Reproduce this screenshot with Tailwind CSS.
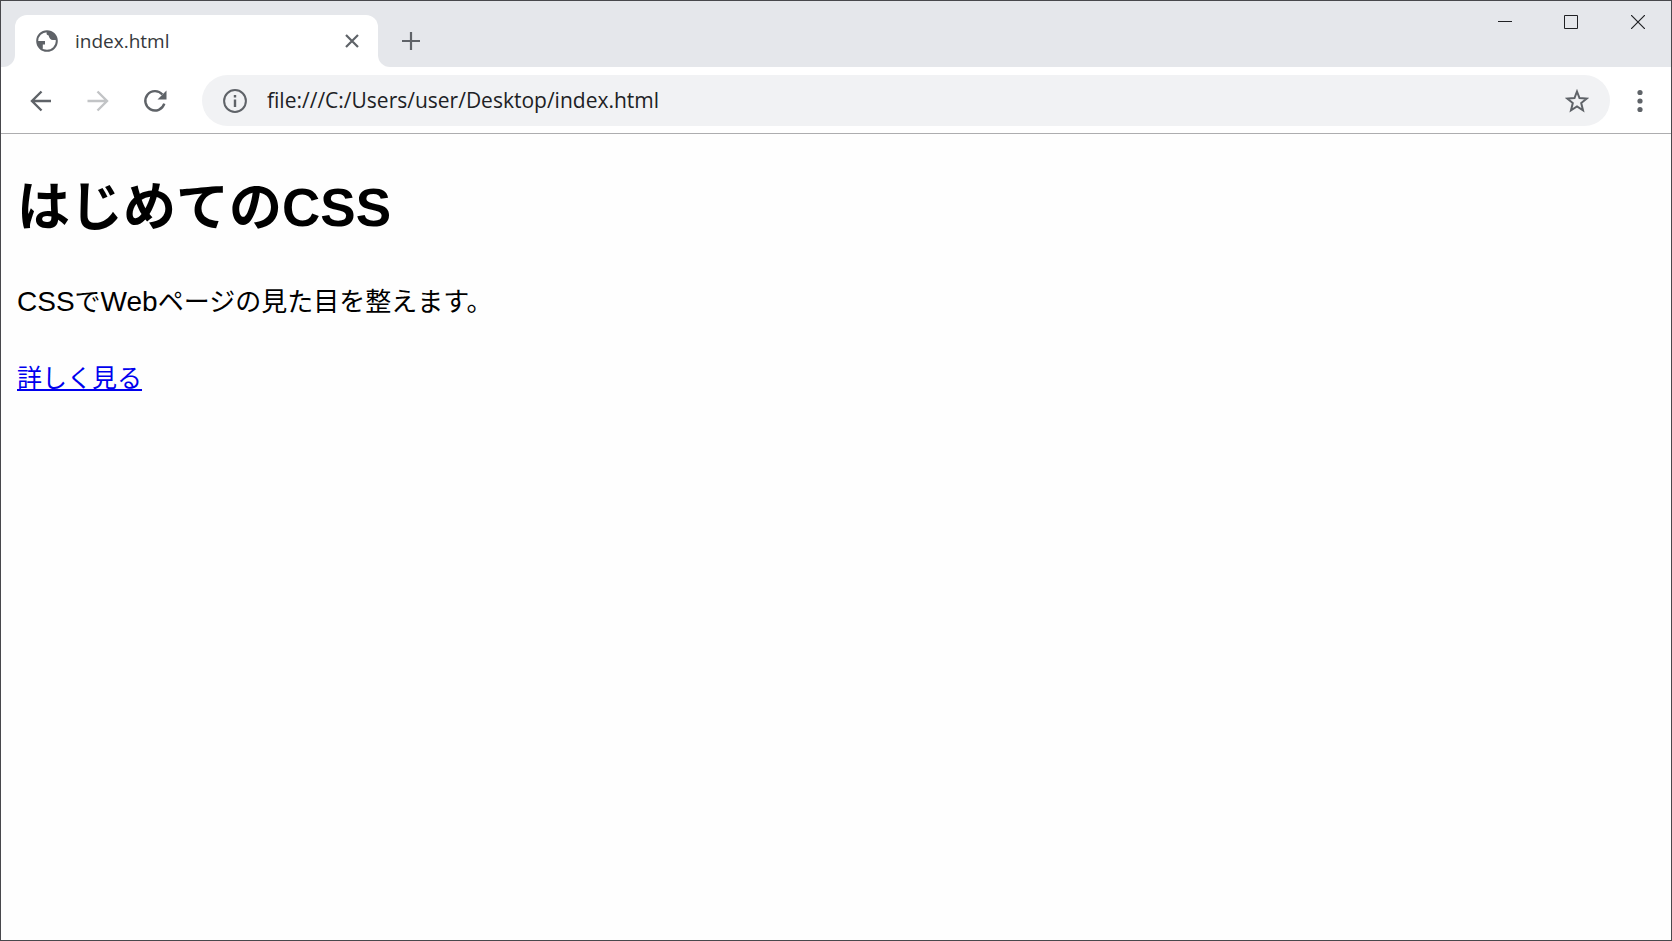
<!DOCTYPE html>
<html lang="ja">
<head>
  <meta charset="UTF-8" />
  <meta name="viewport" content="width=device-width, initial-scale=1.0" />
  <title>index.html</title>
  <script src="https://cdn.jsdelivr.net/npm/@tailwindcss/browser@4"></script>
</head>
<body class="flex min-h-screen flex-col border border-[#48484c] bg-[#fefefe] font-['Open_Sans','Noto_Sans_CJK_JP',sans-serif] text-[#5f6368]">

  <!-- Tab strip -->
  <header class="flex h-[66px] items-stretch bg-white">
    <div class="w-[14px] shrink-0 rounded-br-xl bg-[#e5e7eb]"></div>
    <div class="flex bg-[#e5e7eb] pt-[14px]">
      <div class="flex w-[363px] items-center rounded-t-xl bg-white pr-[14px] pl-5">
        <svg class="size-6 shrink-0" viewBox="0 0 24 24">
          <circle cx="12" cy="12" r="9.8" fill="none" stroke="#5f6368" stroke-width="2" />
          <path fill="#5f6368" d="M2 12h8v3.500H7.800V19.500l-2 .2C3.500 18 2 15 2 12zM11.600 3c-.3 2 .2 3.200 2 3.500.5 2.500 2.200 4.500 4.200 4.500h4c-.3-3.500-2.800-7-6.300-8.300z" />
        </svg>
        <span class="ml-4 grow text-[19px] text-[#35383c]">index.html</span>
        <button type="button" aria-label="タブを閉じる" class="flex size-6 items-center justify-center">
          <svg class="size-[14px]" viewBox="0 0 14 14" fill="none" stroke="#5f6368" stroke-width="2.200">
            <path d="M1 1l12 12M13 1L1 13" />
          </svg>
        </button>
      </div>
    </div>
    <div class="flex grow rounded-bl-xl bg-[#e5e7eb]">
      <button type="button" aria-label="新しいタブ" class="mt-[26px] ml-[19px] flex size-7 items-center justify-center">
        <svg class="size-[18px]" viewBox="0 0 18 18" fill="none" stroke="#5f6368" stroke-width="2.200">
          <path d="M9 0v18M0 9h18" />
        </svg>
      </button>
      <div class="ml-auto flex h-[42px] text-[#202124]">
        <button type="button" aria-label="最小化" class="flex w-[66px] items-center justify-center">
          <svg class="size-[14px]" viewBox="0 0 14 14" fill="none" stroke="currentColor"><path d="M0 6.500h14" /></svg>
        </button>
        <button type="button" aria-label="最大化" class="flex w-[66px] items-center justify-center">
          <svg class="size-[14px]" viewBox="0 0 14 14" fill="none" stroke="currentColor"><path d="M.5.5h13v13H.5z" /></svg>
        </button>
        <button type="button" aria-label="閉じる" class="flex w-[67px] items-center justify-center">
          <svg class="size-[14px]" viewBox="0 0 14 14" fill="none" stroke="currentColor" stroke-width="1.2"><path d="M0 0l14 14M14 0L0 14" /></svg>
        </button>
      </div>
    </div>
  </header>

  <!-- Toolbar -->
  <div class="flex h-[67px] items-center border-b border-[#adadaf] bg-white pt-px pr-[19px] pl-[28px]">
    <nav class="flex shrink-0 gap-[33px]">
      <button type="button" aria-label="戻る">
        <svg class="size-6" viewBox="0 0 24 24" fill="none" stroke="#5f6368" stroke-width="2.400"><path d="M22 12H3.500M12.500 2.500L3 12l9.500 9.500" /></svg>
      </button>
      <button type="button" aria-label="進む" disabled>
        <svg class="size-6" viewBox="0 0 24 24" fill="none" stroke="#c2c4c6" stroke-width="2.400"><path d="M1.500 12h19M11.500 2.500L21 12l-9.500 9.500" /></svg>
      </button>
      <button type="button" aria-label="再読み込み">
        <svg class="size-6" viewBox="0 0 24 24" fill="none" stroke="#5f6368" stroke-width="2.400">
          <path d="M21.300 14.700A9.700 9.700 0 1 1 19.400 5.500" />
          <path fill="#5f6368" stroke="none" d="M23.500 1.500v9h-9z" />
        </svg>
      </button>
    </nav>
    <div class="ml-[35px] flex h-[51px] grow items-center rounded-full bg-[#f1f2f4] px-[21px]">
      <svg class="size-6 shrink-0" viewBox="0 0 24 24">
        <circle cx="12" cy="12" r="10.900" fill="none" stroke="#5f6368" stroke-width="2" />
        <path fill="#5f6368" d="M10.800 10.500h2.400v7.500h-2.400zM10.800 6h2.400v2.400h-2.400z" />
      </svg>
      <input type="text" aria-label="アドレス" value="file:///C:/Users/user/Desktop/index.html" class="ml-5 grow bg-transparent text-[21px] text-[#202124] outline-none" />
      <button type="button" aria-label="ブックマーク">
        <svg class="size-6" viewBox="0 0 24 24" fill="none" stroke="#5f6368" stroke-width="2">
          <path d="M12 2.500l2.500 6.600 7.200.5-5.500 4.500 1.800 7.200-6-3.900-6 3.900 1.800-7.200-5.500-4.500 7.200-.5z" />
        </svg>
      </button>
    </div>
    <button type="button" aria-label="メニュー" class="ml-[18px]">
      <svg class="size-6" viewBox="0 0 24 24" fill="#5f6368">
        <circle cx="12" cy="3.500" r="2.600" /><circle cx="12" cy="12" r="2.600" /><circle cx="12" cy="20.500" r="2.600" />
      </svg>
    </button>
  </div>

  <!-- Page content -->
  <main class="px-4 pt-[38px] font-['Liberation_Sans','Noto_Sans_CJK_JP',sans-serif] text-[26px] leading-10 text-black">
    <h1 class="text-[53px] leading-[72px] font-bold">はじめてのCSS</h1>
    <p class="mt-[38px]"><span class="text-[28px]">CSS</span>で<span class="text-[28px]">Web</span>ページの見た目を整えます。</p>
    <p class="mt-9"><a href="#" class="text-[25px] text-[#0000ee] underline">詳しく見る</a></p>
  </main>

</body>
</html>
